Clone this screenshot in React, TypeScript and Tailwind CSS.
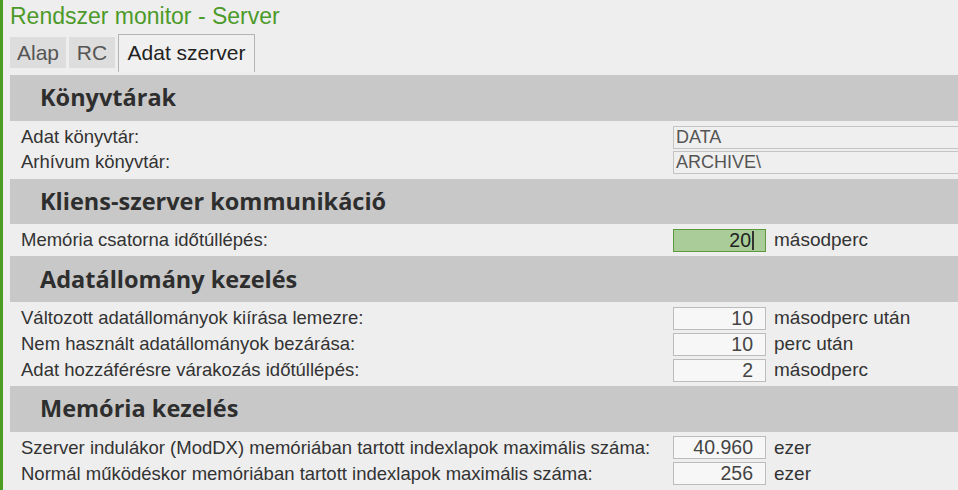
const font = { fontFamily: '"Liberation Sans", Arial, sans-serif' };

function Header({ title }: { title: string }) {
  return (
    <div className="flex h-[46px] items-center bg-[#c8c8c8] pl-[30px]">
      <h2 className="text-[23.5px] font-bold text-[#2e2e2e]" style={{ fontFamily: '"Open Sans", sans-serif' }}>
        {title}
      </h2>
    </div>
  );
}

function TextRow({ label, value }: { label: string; value: string }) {
  return (
    <div className="flex h-[25px] items-center">
      <span className="w-[663px] pl-[11px] text-[18.5px] text-[#333]">{label}</span>
      <div className="flex h-[23px] flex-1 items-center border border-r-0 border-[#c4c4c4] bg-[#efefef] pl-[2px] text-[18px] text-[#555]">
        {value}
      </div>
    </div>
  );
}

function NumRow({
  label,
  value,
  unit,
  active,
}: {
  label: string;
  value: string;
  unit: string;
  active?: boolean;
}) {
  return (
    <div className="flex h-[26px] items-center">
      <span className="w-[663px] whitespace-nowrap pl-[11px] text-[18.5px] text-[#333]">{label}</span>
      <div
        className={
          active
            ? "flex h-[23px] w-[93px] items-center justify-end border border-[#5a9a3c] bg-[#a9cc98] pr-[11px] text-[19.5px] text-[#222]"
            : "flex h-[23px] w-[93px] items-center justify-end border border-[#bcbcbc] bg-[#f7f7f7] pr-[12px] text-[19.5px] text-[#444]"
        }
      >
        {value}
        {active && <span className="ml-px h-[19px] w-[2px] bg-[#333]" />}
      </div>
      <span className="ml-[8px] text-[19px] text-[#333]">{unit}</span>
    </div>
  );
}

export default function App() {
  return (
    <div className="flex h-[490px] w-[958px] overflow-hidden bg-[#eeeeee]" style={font}>
      <div className="w-[3px] shrink-0 bg-[#4c9e22]" />
      <div className="flex min-w-0 flex-1 flex-col pl-[7px]">
        <div className="h-[34px] pt-[3px] text-[23px] leading-[26px] text-[#4c9a2a]">Rendszer monitor - Server</div>
        <div className="flex h-[41px] items-start gap-[3px]">
          <div className="mt-[3px] flex h-[31px] w-[56px] items-center justify-center bg-[#dddddd] text-[21px] text-[#555]">
            Alap
          </div>
          <div className="mt-[3px] flex h-[31px] w-[46px] items-center justify-center bg-[#dddddd] text-[21px] text-[#555]">
            RC
          </div>
          <div className="flex h-[38px] w-[137px] items-center justify-center border border-b-0 border-[#b4b4b4] bg-[#f0f0f0] pb-[2px] text-[21px] text-[#222]">
            Adat szerver
          </div>
        </div>
        <Header title="Könyvtárak" />
        <div className="py-[4px]">
          <TextRow label="Adat könyvtár:" value="DATA" />
          <TextRow label="Arhívum könyvtár:" value="ARCHIVE\" />
        </div>
        <Header title="Kliens-szerver kommunikáció" />
        <div className="py-[3px]">
          <NumRow label="Memória csatorna időtúllépés:" value="20" unit="másodperc" active />
        </div>
        <Header title="Adatállomány kezelés" />
        <div className="py-[3px]">
          <NumRow label="Változott adatállományok kiírása lemezre:" value="10" unit="másodperc után" />
          <NumRow label="Nem használt adatállományok bezárása:" value="10" unit="perc után" />
          <NumRow label="Adat hozzáférésre várakozás időtúllépés:" value="2" unit="másodperc" />
        </div>
        <Header title="Memória kezelés" />
        <div className="py-[3px]">
          <NumRow
            label="Szerver indulákor (ModDX) memóriában tartott indexlapok maximális száma:"
            value="40.960"
            unit="ezer"
          />
          <NumRow
            label="Normál működéskor memóriában tartott indexlapok maximális száma:"
            value="256"
            unit="ezer"
          />
        </div>
      </div>
    </div>
  );
}
